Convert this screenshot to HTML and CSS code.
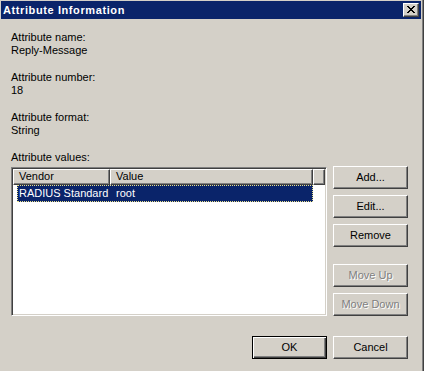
FILE: index.html
```html
<!DOCTYPE html>
<html>
<head>
<meta charset="utf-8">
<link rel="stylesheet" href="styles.css">
</head>
<body>
<div class="window">
  <div class="titlebar">
    <span class="title">Attribute Information</span>
    <div class="close">
      <svg width="8" height="7" viewBox="0 0 8 7" shape-rendering="crispEdges">
        <path fill="#000" d="M0 0h2v1H0zM6 0h2v1H6zM1 1h2v1H1zM5 1h2v1H5zM2 2h4v1H2zM3 3h2v1H3zM2 4h4v1H2zM1 5h2v1H1zM5 5h2v1H5zM0 6h2v1H0zM6 6h2v1H6z"/>
      </svg>
    </div>
  </div>
  <div class="content">
    <div class="field"><div>Attribute name:</div><div>Reply-Message</div></div>
    <div class="field"><div>Attribute number:</div><div>18</div></div>
    <div class="field"><div>Attribute format:</div><div>String</div></div>
    <div class="label">Attribute values:</div>
    <div class="values">
      <div class="listbox">
        <div class="header">
          <div class="hcell vendor">Vendor</div>
          <div class="hcell value">Value</div>
          <div class="hcell filler"></div>
        </div>
        <div class="row selected"><span class="c1">RADIUS Standard</span><span class="c2">root</span></div>
      </div>
      <div class="side">
        <button class="btn">Add...</button>
        <button class="btn">Edit...</button>
        <button class="btn">Remove</button>
        <button class="btn disabled gap-top">Move Up</button>
        <button class="btn disabled">Move Down</button>
      </div>
    </div>
    <div class="footer">
      <button class="btn default">OK</button>
      <button class="btn">Cancel</button>
    </div>
  </div>
</div>
</body>
</html>
```

FILE: styles.css
```css
* { box-sizing: border-box; }
html, body { margin: 0; padding: 0; background: #d4d0c8; }
body { font-family: "Liberation Sans", Arial, sans-serif; font-size: 11px; color: #000; }

.window {
  width: 424px;
  height: 371px;
  background: #d4d0c8;
  padding: 1px 3px 0 1px;
  box-shadow: inset -1px 0 #404040, inset -2px 0 #808080;
  overflow: hidden;
}

.titlebar {
  height: 18px;
  background: #0a246a;
  display: flex;
  align-items: center;
  justify-content: space-between;
  padding: 0 2px 0 2px;
}
.title {
  color: #fff;
  font-weight: bold;
  font-size: 11px;
  letter-spacing: 0.6px;
  line-height: 13px;
}
.close {
  width: 16px;
  height: 14px;
  background: #d4d0c8;
  border: 1px solid;
  border-color: #fff #404040 #404040 #fff;
  box-shadow: inset -1px -1px #808080;
  display: flex;
  align-items: center;
  justify-content: center;
  padding: 0 1px 1px 0;
}
.close svg { display: block; }

.content {
  padding: 12px 13px 0 10px;
}
.field { line-height: 13px; margin-bottom: 14px; }
.label { line-height: 13px; }

.values {
  display: flex;
  gap: 6px;
  margin-top: 2px;
}
.listbox {
  width: 316px;
  height: 149px;
  margin-top: 1px;
  background: #fff;
  border: 1px solid;
  border-color: #808080 #fff #fff #808080;
  box-shadow: inset 1px 1px #404040, inset -1px -1px #d4d0c8;
  padding: 1px;
}
.header {
  display: flex;
  height: 16px;
}
.hcell {
  height: 16px;
  background: #d4d0c8;
  border: 1px solid;
  border-color: #fff #404040 #404040 #fff;
  box-shadow: inset -1px -1px #808080;
  padding-left: 5px;
  line-height: 13px;
  white-space: nowrap;
}
.hcell.vendor { width: 97px; }
.hcell.value { width: 203px; }
.hcell.filler { flex: 1; }

.row {
  display: flex;
  margin-left: 4px;
  width: 296px;
  height: 17px;
  line-height: 17px;
  white-space: nowrap;
}
.row.selected {
  background: #0a246a;
  color: #fff;
  outline: 1px dotted #e8e08a;
  outline-offset: -1px;
}
.c1 { width: 93px; padding-left: 2px; }
.c2 { padding-left: 6px; }

.side {
  display: flex;
  flex-direction: column;
  gap: 6px;
}
.btn {
  width: 75px;
  height: 23px;
  padding: 0;
  margin: 0;
  font-family: "Liberation Sans", Arial, sans-serif;
  font-size: 11px;
  color: #000;
  background: #d4d0c8;
  border: 1px solid;
  border-color: #fff #404040 #404040 #fff;
  box-shadow: inset -1px -1px #808080;
  border-radius: 0;
  text-align: center;
  line-height: 13px;
}
.btn.gap-top { margin-top: 11px; }
.btn.disabled {
  color: #808080;
  text-shadow: 1px 1px #fff;
}
.btn.default {
  border-color: #000;
  box-shadow: inset 1px 1px #fff, inset -1px -1px #404040, inset -2px -2px #808080;
}

.footer {
  display: flex;
  justify-content: flex-end;
  gap: 6px;
  margin-top: 20px;
}
```
